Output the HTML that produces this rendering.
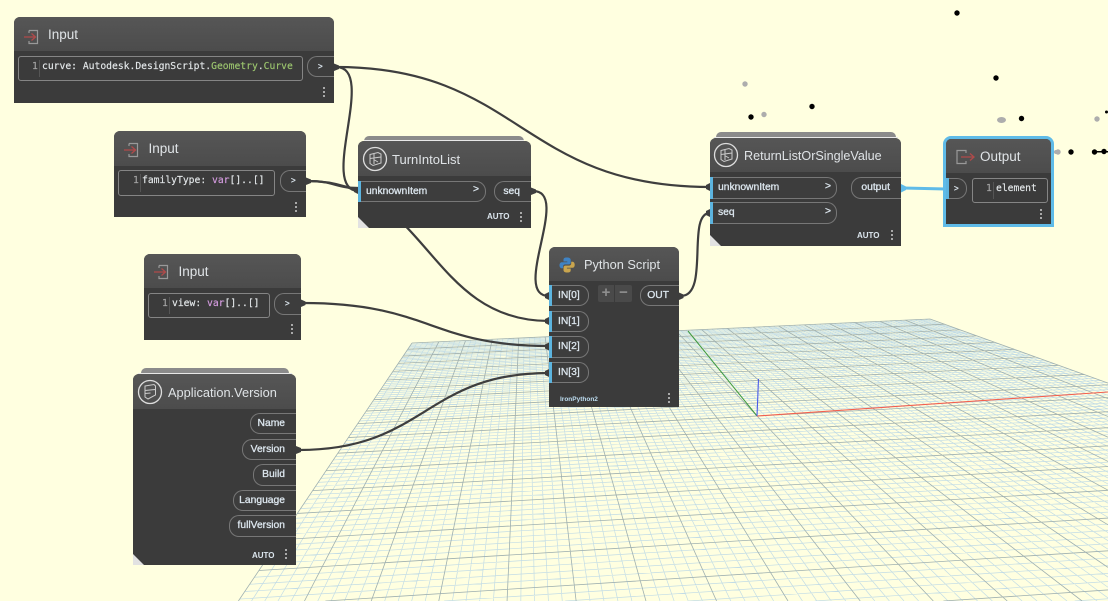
<!DOCTYPE html>
<html><head><meta charset="utf-8">
<style>
html,body{margin:0;padding:0;width:1108px;height:601px;overflow:hidden;background:#ffffe0}
#v{position:relative;width:1108px;height:601px;overflow:hidden;font-family:"Liberation Sans",sans-serif}
svg{position:absolute;left:0;top:0}
.n{position:absolute;background:#3b3b3b;border-radius:6px 6px 0 0;overflow:hidden}
.h{position:absolute;left:0;top:0;right:0;background:linear-gradient(#565656,#4c4c4c);}
.t{position:absolute;color:#dfe3e6;font-size:13px;line-height:16px;white-space:nowrap}
.s{position:absolute;background:#8b8b8b;border-radius:5px 5px 0 0;height:12px}
.sl{position:absolute;background:#e8e8e8;height:1px}
.p{position:absolute;box-sizing:border-box;border:1px solid #777;color:#dce6ee;font-size:10.3px;-webkit-text-stroke:0.3px #dce6ee;white-space:nowrap;line-height:20.5px;background:#3d3d3d}
.i{border-left:none;border-radius:0 10px 10px 0}
.i:before{content:"";position:absolute;left:0;top:-1px;bottom:-1px;width:3px;background:#5cb4df}
.o{border-right:none;border-radius:10px 0 0 10px;text-align:right}
.a{position:absolute;font-size:8px;font-weight:bold;color:#dce6ee;line-height:10px}
.d{position:absolute;width:2px;height:2px;background:#a9a9a9;box-shadow:0 4px #a9a9a9,0 8px #a9a9a9}
.tri{position:absolute;left:0;bottom:0;width:0;height:0;border-left:11px solid #e2e2e2;border-top:11px solid transparent}
.b{position:absolute;box-sizing:border-box;border:1px solid #858585;border-radius:3px}
.c{position:absolute;font-family:"DejaVu Sans Mono","Liberation Mono",monospace;font-size:9.7px;line-height:12px;color:#e4e8ea;white-space:pre;-webkit-text-stroke:0.15px}
.g{color:#9bc46e}.v{color:#d59ce0}.l{color:#a5a5a5}
.r{position:absolute;width:1px;background:#555}
</style></head><body><div id="v">
<svg id="grid" width="1108" height="601" viewBox="0 0 1108 601"></svg>

<svg width="1108" height="601" viewBox="0 0 1108 601" fill="#000">
<g fill="#000"><circle cx="957" cy="13" r="2.7"/><circle cx="996" cy="78" r="2.7"/><circle cx="812" cy="106.500" r="2.7"/><circle cx="751" cy="117" r="2.7"/><circle cx="1021.500" cy="118.500" r="2.7"/><circle cx="1071" cy="152" r="2.7"/><circle cx="1094.500" cy="152" r="2.7"/><circle cx="1104" cy="151.500" r="2.7"/><rect x="1095" y="151" width="13" height="1.500"/><circle cx="1106.500" cy="112" r="1.500"/></g>
<g fill="#adadad"><circle cx="745" cy="84" r="2.700"/><circle cx="764" cy="114.500" r="2.700"/><ellipse cx="1001.500" cy="120" rx="4.500" ry="3"/><circle cx="1097" cy="119" r="2.700"/><circle cx="1058" cy="152" r="2.700"/><circle cx="1056" cy="152" r="2"/></g>
</svg>

<svg width="1108" height="601" viewBox="0 0 1108 601" fill="none" stroke="#3e3e3e" stroke-width="2.200" stroke-linecap="round">
<path d="M307 181C428 181 428 321 549 321"/>
<path d="M336 67C520 67 520 187 710 187"/>
<path d="M336 67C378 67 318 189 358 191"/>
<path d="M307 181C335 181 335 188 358 188"/>
<path d="M533 191C572 191 510 296 549 296"/>
<path d="M303 303C430 303 430 346 549 346"/>
<path d="M299 450C425 450 425 373 549 373"/>
<path d="M681 296C710 296 686 213 710 213"/>
<path d="M903 188L946 189" stroke="#5fbbe8" stroke-width="3"/>
</svg>

<!-- Input 1 -->
<div class="n" style="left:14px;top:17px;width:320px;height:86px"><div class="h" style="height:34px"></div>
<svg width="20" height="16" style="left:9px;top:12px" viewBox="0 0 20 16" fill="none"><path d="M6 1.500H14.500V14.500H6V12M6 1.500V4" stroke="#999" stroke-width="1.200"/><path d="M1 8H12M8.500 4.500L12.500 8L8.500 11.500" stroke="#b04a4a" stroke-width="1.300"/></svg>
<div class="t" style="left:34px;top:10px;font-size:13.500px">Input</div>
<div class="b" style="left:4px;top:39px;width:285px;height:25px"></div>
<div class="c l" style="left:18px;top:44px">1</div><div class="r" style="left:25px;top:43px;height:17px"></div>
<div class="c" style="left:28px;top:44px">curve: Autodesk.DesignScript.<span class="g">Geometry</span>.<span class="g">Curve</span></div>
<div class="p o" style="left:293px;top:39px;width:27px;height:21px;text-align:left;padding-left:10px;font-size:8px">&gt;</div>
<div class="d" style="left:309px;top:70px"></div></div>

<!-- Input 2 -->
<div class="n" style="left:114px;top:131px;width:192px;height:86px"><div class="h" style="height:35px"></div>
<svg width="20" height="16" style="left:9px;top:11px" viewBox="0 0 20 16" fill="none"><path d="M6 1.500H14.500V14.500H6V12M6 1.500V4" stroke="#999" stroke-width="1.200"/><path d="M1 8H12M8.500 4.500L12.500 8L8.500 11.500" stroke="#b04a4a" stroke-width="1.300"/></svg>
<div class="t" style="left:34.500px;top:10px;font-size:13.500px">Input</div>
<div class="b" style="left:4px;top:39px;width:157px;height:26px"></div>
<div class="c l" style="left:19px;top:44px">1</div><div class="r" style="left:26px;top:43px;height:18px"></div>
<div class="c" style="left:28px;top:44px">familyType: <span class="v">var</span>[]..[]</div>
<div class="p o" style="left:166px;top:39px;width:26px;height:22px;text-align:left;padding-left:10px;font-size:8px">&gt;</div>
<div class="d" style="left:181px;top:71px"></div></div>

<!-- Input 3 -->
<div class="n" style="left:144px;top:254px;width:157px;height:86px"><div class="h" style="height:34px"></div>
<svg width="20" height="16" style="left:9px;top:10px" viewBox="0 0 20 16" fill="none"><path d="M6 1.500H14.500V14.500H6V12M6 1.500V4" stroke="#999" stroke-width="1.200"/><path d="M1 8H12M8.500 4.500L12.500 8L8.500 11.500" stroke="#b04a4a" stroke-width="1.300"/></svg>
<div class="t" style="left:34.500px;top:10px;font-size:13.500px">Input</div>
<div class="b" style="left:4px;top:39px;width:122px;height:25px"></div>
<div class="c l" style="left:18px;top:44px">1</div><div class="r" style="left:25px;top:43px;height:17px"></div>
<div class="c" style="left:28px;top:44px">view: <span class="v">var</span>[]..[]</div>
<div class="p o" style="left:130px;top:39px;width:27px;height:22px;text-align:left;padding-left:10px;font-size:8px">&gt;</div>
<div class="d" style="left:147px;top:70px"></div></div>

<!-- TurnIntoList -->
<div class="s" style="left:364px;top:136px;width:160px"></div><div class="sl" style="left:364px;top:140px;width:160px"></div>
<div class="n" style="left:358px;top:141px;width:173px;height:87px"><div class="h" style="height:35px"></div>
<svg width="28" height="28" style="left:3px;top:4px" viewBox="0 0 28 28" fill="none"><circle cx="14" cy="14" r="11.500" stroke="#ddd" stroke-width="1.300"/><path d="M9 9.500L17 7.500L20 9V18L12 20.500L9 18.500ZM13 9V19M9 13.500L20 12M13.500 15L17 17" stroke="#ccc" stroke-width="1"/></svg>
<div class="t" style="left:34px;top:11px;font-size:13px">TurnIntoList</div>
<div class="p i" style="left:0;top:40px;width:128px;height:21px;padding-left:8px">unknownItem<span style="position:absolute;right:6px;top:-2px">&gt;</span></div>
<div class="p o" style="left:136px;top:40px;width:37px;height:21px;padding-right:11px">seq</div>
<div class="a" style="left:129px;top:71px">AUTO</div><div class="d" style="left:162px;top:71px"></div><div class="tri"></div></div>

<!-- Python -->
<div class="n" style="left:549px;top:247px;width:130px;height:160px"><div class="h" style="height:34px"></div>
<svg width="16" height="16" style="left:10px;top:10px" viewBox="0 0 16 16"><path d="M8 0.500C5 0.500 4.500 1.500 4.500 3V4.500H8.300V5.200H3C1.300 5.200 0.500 6.500 0.500 8.300C0.500 10 1.300 11.300 2.800 11.300H4V9.500C4 8.200 5 7.400 6.200 7.400H9.800C11 7.400 11.700 6.500 11.700 5.500V3C11.700 1.500 10.500 0.500 8 0.500Z" fill="#3f83c4"/><path d="M8.200 15.500C11.200 15.500 11.700 14.500 11.700 13V11.500H7.900V10.800H13.200C14.900 10.800 15.700 9.500 15.700 7.700C15.700 6 14.900 4.700 13.400 4.700H12.200V6.500C12.200 7.800 11.200 8.600 10 8.600H6.400C5.200 8.600 4.500 9.500 4.500 10.500V13C4.500 14.500 5.700 15.500 8.200 15.500Z" fill="#c9a54e"/></svg>
<div class="t" style="left:35px;top:10px;font-size:12.800px">Python Script</div>
<div class="p i" style="left:0;top:38px;width:40px;height:21px;padding-left:9px">IN[0]</div>
<div class="p i" style="left:0;top:64px;width:40px;height:21px;padding-left:9px">IN[1]</div>
<div class="p i" style="left:0;top:89px;width:40px;height:22px;padding-left:9px">IN[2]</div>
<div class="p i" style="left:0;top:115px;width:40px;height:21px;padding-left:9px">IN[3]</div>
<div class="p o" style="left:91px;top:38px;width:39px;height:21px;padding-right:10px">OUT</div>
<div style="position:absolute;left:49px;top:38px;width:16px;height:17px;background:#4a4a4a;border-radius:2px 0 0 2px;color:#8f8f8f;font-size:15px;font-weight:bold;line-height:16px;text-align:center">+</div>
<div style="position:absolute;left:66px;top:38px;width:17px;height:17px;background:#4a4a4a;border-radius:0 2px 2px 0;color:#8f8f8f;font-size:15px;font-weight:bold;line-height:15px;text-align:center">−</div>
<div class="a" style="left:11px;top:148px;font-size:6.500px;color:#bcdcf0">IronPython2</div><div class="d" style="left:119px;top:146px"></div></div>

<!-- Return -->
<div class="s" style="left:716px;top:132px;width:180px"></div><div class="sl" style="left:714px;top:137px;width:184px"></div>
<div class="n" style="left:710px;top:138px;width:191px;height:108px"><div class="h" style="height:34px"></div>
<svg width="28" height="28" style="left:2px;top:3px" viewBox="0 0 28 28" fill="none"><circle cx="14" cy="14" r="11.500" stroke="#ddd" stroke-width="1.300"/><path d="M9 9.500L17 7.500L20 9V18L12 20.500L9 18.500ZM13 9V19M9 13.500L20 12M13.500 15L17 17" stroke="#ccc" stroke-width="1"/></svg>
<div class="t" style="left:34px;top:10px;font-size:12.600px">ReturnListOrSingleValue</div>
<div class="p i" style="left:0;top:39px;width:127px;height:22px;padding-left:8px">unknownItem<span style="position:absolute;right:5px;top:-1px">&gt;</span></div>
<div class="p i" style="left:0;top:64px;width:127px;height:22px;padding-left:8px">seq<span style="position:absolute;right:5px;top:-1px">&gt;</span></div>
<div class="p o" style="left:141px;top:39px;width:50px;height:22px;padding-right:11px">output</div>
<div class="a" style="left:147px;top:93px">AUTO</div><div class="d" style="left:181px;top:92px"></div><div class="tri"></div></div>

<!-- Output -->
<div class="n" style="left:943px;top:136px;width:111px;height:91px;box-sizing:border-box;border:3px solid #5fbbe8;border-radius:8px 8px 0 0"><div class="h" style="height:34px"></div>
<svg width="20" height="16" style="left:10px;top:10px" viewBox="0 0 20 16" fill="none"><path d="M10 4V1.500H1V14.500H10V12" stroke="#999" stroke-width="1.200"/><path d="M5 8H17.500M14 4.500L18 8L14 11.500" stroke="#b04a4a" stroke-width="1.300"/></svg>
<div class="t" style="left:34px;top:10px;font-size:13.500px">Output</div>
<div class="p i" style="left:0;top:39px;width:21px;height:21px;padding-left:8px;font-size:8px">&gt;</div>
<div class="b" style="left:26px;top:39px;width:76px;height:25px"></div>
<div class="c l" style="left:40px;top:44px">1</div><div class="r" style="left:47px;top:43px;height:17px"></div>
<div class="c" style="left:50px;top:44px">element</div>
<div class="d" style="left:94px;top:70px"></div></div>

<!-- Application.Version -->
<div class="s" style="left:141px;top:368px;width:148px"></div><div class="sl" style="left:138px;top:373px;width:154px"></div>
<div class="n" style="left:133px;top:374px;width:163px;height:191px"><div class="h" style="height:35px"></div>
<svg width="28" height="28" style="left:3px;top:4px" viewBox="0 0 28 28" fill="none"><circle cx="14" cy="14" r="11.500" stroke="#ddd" stroke-width="1.300"/><path d="M9 8L18 6.500L19.500 8V17L12 21L9 19ZM9 12.500L19 11.500M9 15.500L14.500 15" stroke="#ccc" stroke-width="1"/></svg>
<div class="t" style="left:35px;top:11px;font-size:12.800px">Application.Version</div>
<div class="p o" style="left:117px;top:39px;width:46px;height:21px;padding-right:11px">Name</div>
<div class="p o" style="left:109px;top:65px;width:54px;height:21px;padding-right:11px">Version</div>
<div class="p o" style="left:120px;top:90px;width:43px;height:22px;padding-right:11px">Build</div>
<div class="p o" style="left:100px;top:116px;width:63px;height:21px;padding-right:11px">Language</div>
<div class="p o" style="left:96px;top:141px;width:67px;height:22px;padding-right:11px">fullVersion</div>
<div class="a" style="left:119px;top:177px">AUTO</div><div class="d" style="left:152px;top:175px"></div><div class="tri"></div></div>

<svg width="1108" height="601" viewBox="0 0 1108 601" fill="#3e3e3e">
<path d="M334 63.500L339 65.500V69L334 71ZM306 177.500L311 179.500V183L306 185ZM301 299.500L305.500 301.500V305L301 307ZM296 446L301 448V452L296 454ZM531 187.500L536 189.500V193L531 195ZM679 292.500L683.500 294.500V298L679 300Z"/>
<path d="M549 292L545 294V298L549 300ZM549 317L545 319V323L549 325ZM549 342.500L545 344.500V348.500L549 350.500ZM549 369L545 371V375L549 377ZM710 183L706 185V189L710 191ZM710 209L706 211V215L710 217ZM358 187L354 188.500V192L358 194Z"/>
<path d="M901 184L906 186.500V190L901 192.500Z" fill="#5fbbe8"/>
</svg>

<script>
(function(){
var P=[[412,343],[930,319],[1830,643],[124,771]];
var x0=P[0][0],y0=P[0][1],x1=P[1][0],y1=P[1][1],x2=P[2][0],y2=P[2][1],x3=P[3][0],y3=P[3][1];
var dx1=x1-x2,dx2=x3-x2,dx3=x0-x1+x2-x3,dy1=y1-y2,dy2=y3-y2,dy3=y0-y1+y2-y3;
var D=dx1*dy2-dx2*dy1,g=(dx3*dy2-dx2*dy3)/D,h=(dx1*dy3-dx3*dy1)/D;
var a=x1-x0+g*x1,b=x3-x0+h*x3,c=x0,d=y1-y0+g*y1,e=y3-y0+h*y3,f=y0;
function m(u,v){var w=g*u+h*v+1;return [(a*u+b*v+c)/w,(d*u+e*v+f)/w];}
function seg(A,B){
 var t0=0,t1=1,dx=B[0]-A[0],dy=B[1]-A[1];
 var ps=[-dx,dx,-dy,dy],qs=[A[0],1108-A[0],A[1],601-A[1]];
 for(var k=0;k<4;k++){
  if(ps[k]==0){if(qs[k]<0)return "";continue;}
  var r=qs[k]/ps[k];
  if(ps[k]<0){if(r>t0)t0=r;}else{if(r<t1)t1=r;}
 }
 if(t0>=t1)return "";
 return "M"+(A[0]+t0*dx).toFixed(2)+" "+(A[1]+t0*dy).toFixed(2)+"L"+(A[0]+t1*dx).toFixed(2)+" "+(A[1]+t1*dy).toFixed(2);
}
var N=100,minor="",major="";
for(var i=0;i<=N;i++){var t=i/N;
 var s=seg(m(t,0),m(t,1))+seg(m(0,t),m(1,t));
 if(i%5==0)major+=s;else minor+=s;}
document.getElementById("grid").innerHTML=
 '<path d="'+minor+'" fill="none" stroke="#c2dce6" stroke-width="0.7"/>'+
 '<path d="'+major+'" fill="none" stroke="#9fb0b0" stroke-width="0.8"/>'+
 '<path d="M757 416L688 331" stroke="#3f9a3f" stroke-width="1"/>'+
 '<path d="M757 416L1108 392" stroke="#f2604f" stroke-width="1.100"/>'+
 '<path d="M757 416L758.500 379" stroke="#4a5ae8" stroke-width="1.100"/>';
})();
</script>
</div></body></html>
